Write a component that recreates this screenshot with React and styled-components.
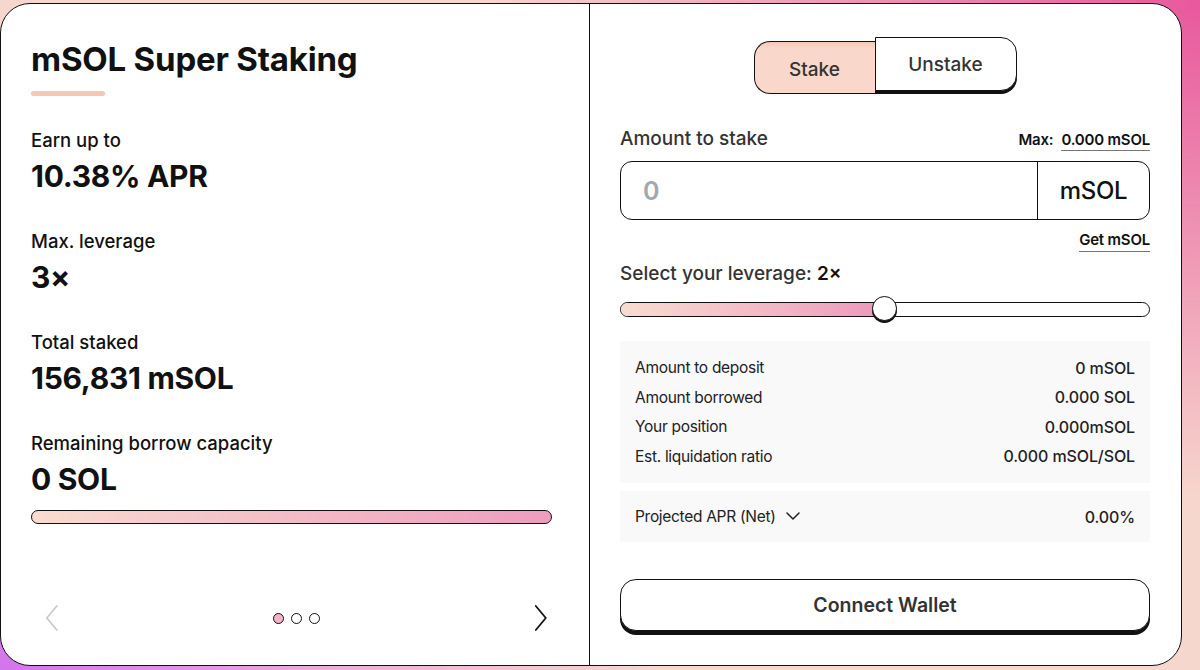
import React from "react";
import styled, { createGlobalStyle } from "styled-components";

const GlobalStyle = createGlobalStyle`
  html, body {
    margin: 0;
    padding: 0;
  }
  body {
    font-family: Inter, "Noto Sans", sans-serif;
    color: #111;
  }
`;

const Page = styled.div`
  width: 1200px;
  height: 670px;
  box-sizing: border-box;
  padding: 3px 18px 4px 0;
  background:
    radial-gradient(ellipse 60% 75% at 100% 0%, #e8589d 0%, rgba(232, 88, 157, 0.55) 45%, rgba(232, 88, 157, 0) 100%),
    radial-gradient(ellipse 55% 60% at 0% 100%, #d374ec 0%, rgba(211, 116, 236, 0.4) 50%, rgba(211, 116, 236, 0) 100%),
    #f6d7cd;
`;

const Card = styled.div`
  height: 100%;
  box-sizing: border-box;
  display: grid;
  grid-template-columns: 589px 1fr;
  background: #fff;
  border: 1.5px solid #111;
  border-radius: 30px;
  overflow: hidden;
`;

const LeftPane = styled.section`
  display: flex;
  flex-direction: column;
  padding: 35px 37px 32px 30px;
  border-right: 1.5px solid #111;
`;

const Title = styled.h1`
  margin: 0;
  font-size: 33px;
  line-height: 40px;
  font-weight: 700;
  letter-spacing: -0.2px;
`;

const Accent = styled.div`
  width: 74px;
  height: 5px;
  margin: 12px 0 32px;
  border-radius: 3px;
  background: #f5c8b6;
`;

const Stat = styled.div`
  display: flex;
  flex-direction: column;
  gap: 6px;
  & + & {
    margin-top: 35px;
  }
`;

const StatLabel = styled.div`
  font-size: 18.5px;
  line-height: 24px;
  font-weight: 500;
`;

const StatValue = styled.div`
  font-size: 30px;
  line-height: 36px;
  font-weight: 700;
  letter-spacing: -0.3px;
`;

const Capacity = styled.div`
  margin-top: 13px;
  height: 14px;
  box-sizing: border-box;
  border: 1.5px solid #111;
  border-radius: 7px;
  background: linear-gradient(90deg, #f8ddcf 0%, #f3b8c6 55%, #ee9dbd 100%);
`;

const Carousel = styled.div`
  margin-top: auto;
  display: flex;
  align-items: center;
  justify-content: space-between;
  height: 30px;
  padding: 0 3px 0 13px;
`;

const ArrowButton = styled.button`
  border: none;
  background: none;
  padding: 0;
  display: flex;
  color: ${({ $disabled }) => ($disabled ? "#c9c9c9" : "#111")};
`;

const Dots = styled.div`
  display: flex;
  gap: 7px;
`;

const Dot = styled.span`
  width: 11px;
  height: 11px;
  box-sizing: border-box;
  border-radius: 50%;
  border: 1.5px solid #111;
  background: ${({ $active }) => ($active ? "#f3b5c5" : "#fff")};
`;

const RightPane = styled.section`
  display: flex;
  flex-direction: column;
  padding: 33px 31px 34px 30px;
`;

const Toggle = styled.div`
  align-self: center;
  display: flex;
  align-items: flex-end;
`;

const StakeTab = styled.button`
  width: 121px;
  height: 53px;
  box-sizing: border-box;
  border: 1.5px solid #111;
  border-right: none;
  border-radius: 16px 0 0 16px;
  background: linear-gradient(180deg, #f3c9b9 0%, #f9d8cb 12%, #f9d8cb 100%);
  font-family: inherit;
  font-size: 19px;
  font-weight: 500;
  color: #333;
  padding-top: 4px;
`;

const UnstakeTab = styled.button`
  width: 142px;
  height: 54px;
  margin-bottom: 3px;
  box-sizing: border-box;
  border: 1.5px solid #111;
  border-radius: 0 16px 16px 0;
  background: #fff;
  box-shadow: 0 3px 0 #111;
  font-family: inherit;
  font-size: 19px;
  font-weight: 500;
  color: #333;
`;

const FieldHead = styled.div`
  display: flex;
  justify-content: space-between;
  align-items: baseline;
  margin-top: 33px;
`;

const FieldLabel = styled.div`
  font-size: 19px;
  line-height: 24px;
  font-weight: 500;
  color: #333;
`;

const MaxText = styled.div`
  font-size: 15px;
  font-weight: 600;
  letter-spacing: -0.2px;
  display: flex;
  gap: 8px;
`;

const Linkish = styled.span`
  font-size: 15px;
  font-weight: 600;
  letter-spacing: -0.2px;
  padding-bottom: 1px;
  border-bottom: 1.5px solid #777;
`;

const InputBox = styled.div`
  margin-top: 10px;
  height: 59px;
  box-sizing: border-box;
  display: grid;
  grid-template-columns: 1fr 112px;
  border: 1.5px solid #111;
  border-radius: 12px;
`;

const AmountInput = styled.input`
  border: none;
  outline: none;
  background: transparent;
  padding: 0 0 0 22px;
  font-family: inherit;
  font-size: 25px;
  font-weight: 600;
  color: #111;
  min-width: 0;
  &::placeholder {
    color: #a3a7ae;
  }
`;

const Unit = styled.div`
  display: flex;
  align-items: center;
  justify-content: center;
  border-left: 1.5px solid #111;
  font-size: 24px;
  font-weight: 500;
  letter-spacing: -0.3px;
`;

const GetRow = styled.div`
  display: flex;
  justify-content: flex-end;
  margin-top: 10px;
  line-height: 20px;
`;

const LeverageLabel = styled(FieldLabel)`
  margin-top: 10px;
  b {
    font-weight: 600;
    color: #111;
  }
`;

const Slider = styled.div`
  margin-top: 10px;
  height: 26px;
  display: flex;
  align-items: center;
`;

const Track = styled.div`
  flex: 1;
  height: 15px;
  box-sizing: border-box;
  border: 1.5px solid #111;
  border-radius: 8px;
  display: flex;
  align-items: center;
  background: #fff;
`;

const Fill = styled.div`
  height: 100%;
  border-radius: 7px 0 0 7px;
  background: linear-gradient(90deg, #f8ddcf 0%, #f3b5c6 60%, #ec98ba 100%);
  position: relative;
`;

const Thumb = styled.span`
  position: absolute;
  right: -12px;
  top: 50%;
  width: 25px;
  height: 25px;
  margin-top: -13px;
  box-sizing: border-box;
  border-radius: 50%;
  border: 1.5px solid #111;
  background: #fff;
  box-shadow: 0 2px 0 #111;
`;

const InfoBox = styled.div`
  margin-top: 19px;
  padding: 12px 15px;
  background: #f9f9f9;
  display: flex;
  flex-direction: column;
`;

const InfoRow = styled.div`
  display: flex;
  justify-content: space-between;
  align-items: center;
  height: ${({ $tall }) => ($tall ? "51px" : "29.5px")};
  font-size: 15.5px;
  letter-spacing: -0.3px;
  color: #222;
`;

const InfoValue = styled.span`
  font-size: 16px;
  font-weight: 500;
  letter-spacing: -0.1px;
`;

const AprBox = styled(InfoBox)`
  margin-top: 8px;
  padding: 0 15px;
`;

const AprLabel = styled.span`
  display: flex;
  align-items: center;
  gap: 10px;
`;

const ConnectButton = styled.button`
  margin-top: auto;
  height: 52px;
  box-sizing: border-box;
  border: 1.5px solid #111;
  border-radius: 16px;
  background: #fff;
  box-shadow: 0 4px 0 #111;
  font-family: inherit;
  font-size: 19.5px;
  font-weight: 600;
  color: #333;
`;

const Chevron = ({ dir, size = 26 }) => (
  <svg width={size * 0.6} height={size} viewBox="0 0 12 26" fill="none">
    <polyline
      points={dir === "left" ? "11,1 1,13 11,25" : "1,1 11,13 1,25"}
      stroke="currentColor"
      strokeWidth="1.8"
      strokeLinecap="round"
      strokeLinejoin="round"
    />
  </svg>
);

const stats = [
  { label: "Earn up to", value: "10.38% APR" },
  { label: "Max. leverage", value: "3×" },
  { label: "Total staked", value: "156,831 mSOL" },
  { label: "Remaining borrow capacity", value: "0 SOL" },
];

const details = [
  ["Amount to deposit", "0 mSOL"],
  ["Amount borrowed", "0.000 SOL"],
  ["Your position", "0.000mSOL"],
  ["Est. liquidation ratio", "0.000 mSOL/SOL"],
];

export default function App() {
  const leverage = 2;
  const maxLeverage = 3;
  const fillPct = ((leverage - 1) / (maxLeverage - 1)) * 100;

  return (
    <>
      <GlobalStyle />
      <Page>
        <Card>
          <LeftPane>
            <Title>mSOL Super Staking</Title>
            <Accent />
            {stats.map((s) => (
              <Stat key={s.label}>
                <StatLabel>{s.label}</StatLabel>
                <StatValue>{s.value}</StatValue>
              </Stat>
            ))}
            <Capacity />
            <Carousel>
              <ArrowButton $disabled>
                <Chevron dir="left" />
              </ArrowButton>
              <Dots>
                <Dot $active />
                <Dot />
                <Dot />
              </Dots>
              <ArrowButton>
                <Chevron dir="right" />
              </ArrowButton>
            </Carousel>
          </LeftPane>

          <RightPane>
            <Toggle>
              <StakeTab>Stake</StakeTab>
              <UnstakeTab>Unstake</UnstakeTab>
            </Toggle>

            <FieldHead>
              <FieldLabel>Amount to stake</FieldLabel>
              <MaxText>
                Max: <Linkish>0.000 mSOL</Linkish>
              </MaxText>
            </FieldHead>
            <InputBox>
              <AmountInput placeholder="0" />
              <Unit>mSOL</Unit>
            </InputBox>
            <GetRow>
              <Linkish>Get mSOL</Linkish>
            </GetRow>

            <LeverageLabel>
              Select your leverage: <b>{leverage}×</b>
            </LeverageLabel>
            <Slider>
              <Track>
                <Fill style={{ width: `${fillPct}%` }}>
                  <Thumb />
                </Fill>
              </Track>
            </Slider>

            <InfoBox>
              {details.map(([k, v]) => (
                <InfoRow key={k}>
                  <span>{k}</span>
                  <InfoValue>{v}</InfoValue>
                </InfoRow>
              ))}
            </InfoBox>
            <AprBox>
              <InfoRow $tall>
                <AprLabel>
                  Projected APR (Net)
                  <svg width="14" height="9" viewBox="0 0 14 9" fill="none">
                    <polyline points="1,1 7,7 13,1" stroke="#222" strokeWidth="1.5" strokeLinecap="round" strokeLinejoin="round" />
                  </svg>
                </AprLabel>
                <InfoValue>0.00%</InfoValue>
              </InfoRow>
            </AprBox>

            <ConnectButton>Connect Wallet</ConnectButton>
          </RightPane>
        </Card>
      </Page>
    </>
  );
}
